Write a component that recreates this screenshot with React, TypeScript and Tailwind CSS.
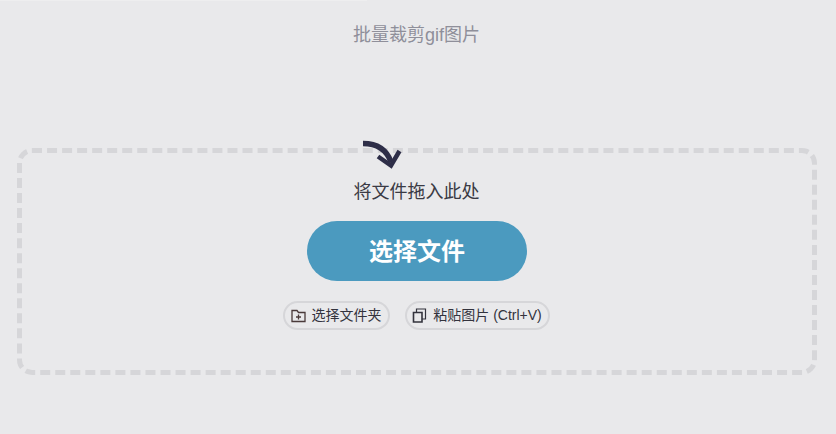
const font = '[font-family:"Liberation_Sans","Noto_Sans_CJK_SC",sans-serif]'

export default function App() {
  return (
    <div className={`${font} h-[434px] w-[836px] overflow-hidden bg-[#e9e9eb]`}>
      {/* Top strip */}
      <div className="h-px w-[367px] bg-[#eeeeef]" />

      {/* Title */}
      <h1 className="pt-[21px] pr-[3px] text-center text-[18px] leading-[26px] font-normal text-[#8f8f9a]">批量裁剪gif图片</h1>

      {/* Drop zone */}
      <div className="relative mx-[17px] mt-[100px] flex h-[227px] w-[800px] flex-col items-center rounded-[15px] border-[5px] border-dashed border-[#d6d6d9]">
        <svg className="absolute top-[-13px] left-[338px]" width="44" height="32" viewBox="0 0 44 32" fill="none">
          <path d="M3 3.5C15 3.5 26 8 31 22" stroke="#2e2e48" strokeWidth="5.5" />
          <path d="M18 16.5L31 25.5L39.5 11" stroke="#2e2e48" strokeWidth="4.5" />
        </svg>
        <p className="mt-[26px] pr-[1px] text-[18px] leading-[26px] text-[#3a3a44]">将文件拖入此处</p>
        <button className="mt-[16px] h-[60px] w-[220px] rounded-[30px] bg-[#4b9abf] pt-[2px] text-[24px] font-bold text-white">选择文件</button>
        <div className="mt-[20px] flex gap-[15px] pr-[2px]">
          <button className="flex h-[29px] w-[107px] items-center justify-center gap-[6px] rounded-[15px] border-2 border-[#d6d6d9] text-[14px] text-[#33333d]">
            <svg width="15" height="14" viewBox="0 0 15 14" fill="none" stroke="#4a3a3a" strokeWidth="1.3">
              <path d="M1 12.5V1.5H6L7.5 3.5H14V12.5Z" />
              <path d="M7.5 5.5V10.5M5 8H10" />
            </svg>
            选择文件夹
          </button>
          <button className="flex h-[29px] w-[145px] items-center justify-center gap-[6px] rounded-[15px] border-2 border-[#d6d6d9] text-[14px] text-[#33333d]">
            <svg width="15" height="15" viewBox="0 0 15 15" fill="none" stroke="#33333d">
              <path d="M1.5 4.5H10V14H1.5Z" strokeWidth="1.6" />
              <path d="M4.5 4.5V1H13.5V11H10" strokeWidth="1.2" />
            </svg>
            粘贴图片 (Ctrl+V)
          </button>
        </div>
      </div>
    </div>
  )
}
